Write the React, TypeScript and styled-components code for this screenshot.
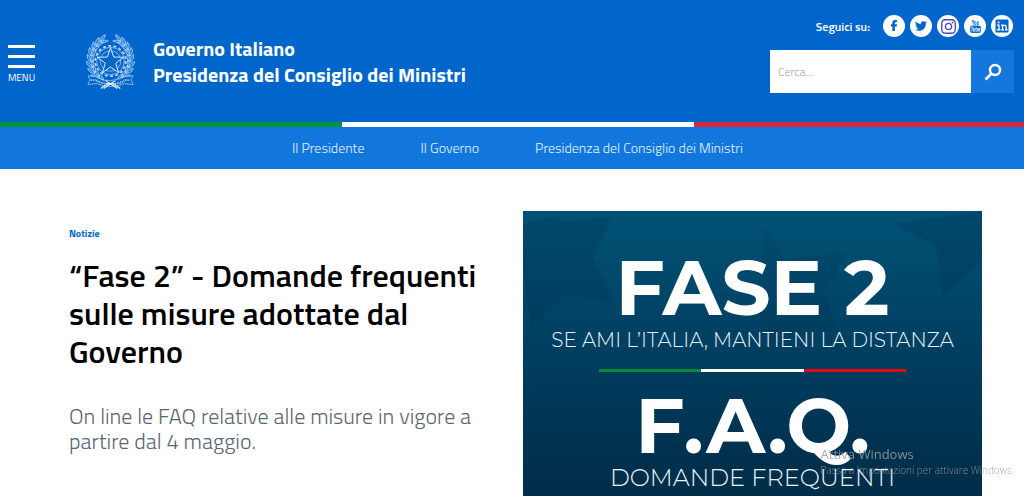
import React from 'react';
import styled, { createGlobalStyle } from 'styled-components';
import { FaTwitter, FaInstagram } from 'react-icons/fa';
import { TfiYoutube } from 'react-icons/tfi';

const GlobalStyle = createGlobalStyle`
  * { box-sizing: border-box; }
  body { margin: 0; background: #fff; font-family: "Titillium Web", Roboto, sans-serif; }
  a { color: inherit; text-decoration: none; }
`;

const Page = styled.div`
  display: flex;
  flex-direction: column;
  min-height: 100vh;
`;

const Header = styled.header`
  display: flex;
  justify-content: space-between;
  height: 122px;
  padding: 0 10px 0 8px;
  background: #0066cc;
  color: #fff;
`;

const HeaderStart = styled.div`
  display: flex;
  align-items: flex-start;
  padding-top: 34px;
`;

const MenuButton = styled.button`
  display: flex;
  flex-direction: column;
  align-items: center;
  width: 27px;
  margin: 11px 51px 0 0;
  padding: 0;
  border: 0;
  background: none;
  color: #fff;
  font: 400 10px/10px "Titillium Web", Roboto, sans-serif;
`;

const MenuBar = styled.span`
  width: 27px;
  height: 3px;
  margin-bottom: 7px;
  background: #fff;
  &:last-of-type { margin-bottom: 5px; }
`;

const Brand = styled.a`
  display: flex;
  gap: 18px;
`;

const BrandName = styled.span`
  padding-top: 2px;
  font-size: 20px;
  font-weight: 700;
  line-height: 26px;
`;

const HeaderEnd = styled.div`
  display: flex;
  flex-direction: column;
  align-items: flex-end;
  gap: 13px;
  width: 244px;
  padding-top: 15px;
`;

const Social = styled.div`
  display: flex;
  align-items: center;
  gap: 5px;
  padding-right: 1px;
  font-size: 12px;
  font-weight: 600;
`;

const SocialLabel = styled.span`
  margin-right: 8px;
`;

const SocialLink = styled.a<{ $color?: string }>`
  display: flex;
  align-items: center;
  justify-content: center;
  width: 22px;
  height: 22px;
  border-radius: 50%;
  background: #fff;
  color: ${(p) => p.$color ?? '#0066cc'};
`;

const Search = styled.form`
  display: flex;
  width: 100%;
  height: 43px;
`;

const SearchInput = styled.input`
  flex: 1;
  min-width: 0;
  padding: 0 8px;
  border: 0;
  border-radius: 0;
  background: #fff;
  font: 300 12px "Titillium Web", Roboto, sans-serif;
  &::placeholder { color: #a8a8a8; opacity: 1; }
`;

const SearchButton = styled.button`
  display: flex;
  align-items: center;
  justify-content: center;
  width: 43px;
  padding: 0;
  border: 0;
  background: #1477de;
`;

const FlagStripe = styled.div`
  display: grid;
  grid-template-columns: 342fr 352fr 330fr;
  height: 5px;
`;

const Stripe = styled.span<{ $color: string }>`
  background: ${(p) => p.$color};
`;

const Nav = styled.nav`
  display: flex;
  justify-content: center;
  align-items: center;
  gap: 56px;
  height: 42px;
  padding-left: 11px;
  background: #1277dc;
  color: #e4f1ff;
  font-size: 14px;
  font-weight: 300;
  line-height: 20px;
`;

const Main = styled.main`
  display: grid;
  grid-template-columns: 412fr 459fr;
  column-gap: 42px;
  flex: 1;
  padding: 42px 42px 0 69px;
`;

const Article = styled.article`
  display: flex;
  flex-direction: column;
  align-items: flex-start;
  padding-top: 15px;
`;

const Category = styled.a`
  color: #0066cc;
  font-size: 10px;
  font-weight: 700;
  line-height: 16px;
`;

const Title = styled.h1`
  margin: 14px 0 0;
  color: #000;
  font-size: 32px;
  font-weight: 600;
  line-height: 38px;
`;

const Summary = styled.p`
  margin: 34px 0 0;
  color: #5a6772;
  font-size: 22px;
  font-weight: 300;
  line-height: 25px;
`;

const Poster = styled.section`
  position: relative;
  display: flex;
  flex-direction: column;
  align-items: center;
  padding-top: 38px;
  background: linear-gradient(#005275, #003e60 50%, #002c47);
  color: #fff;
  font-family: Montserrat, Lato, sans-serif;
  white-space: nowrap;
`;

const PosterArt = styled.svg`
  position: absolute;
  inset: 0;
  width: 100%;
  height: 100%;
`;

const PosterHeading = styled.h2`
  position: relative;
  margin: 0;
  font-size: 77px;
  font-weight: 700;
  line-height: 76px;
`;

const PosterText = styled.p<{ $size: number }>`
  position: relative;
  margin: 0;
  color: #e8f4fb;
  font-size: ${(p) => p.$size}px;
  font-weight: 300;
  line-height: 30px;
`;

const PosterFlag = styled.div`
  position: relative;
  display: grid;
  grid-template-columns: repeat(3, 1fr);
  width: 67%;
  height: 3px;
  margin: 14px 0 15px;
`;

const Watermark = styled.aside`
  position: fixed;
  right: 10px;
  bottom: 18px;
  color: rgba(150, 158, 164, 0.85);
  font: 300 10px/16px "Open Sans", sans-serif;
  pointer-events: none;
`;

const WatermarkTitle = styled.div`
  font-size: 13px;
  font-weight: 400;
`;

const starPoints = (cx: number, cy: number, outer: number, inner: number) =>
  Array.from({ length: 10 }, (_, i) => {
    const r = i % 2 ? inner : outer;
    const a = (-90 + i * 36) * (Math.PI / 180);
    return `${(cx + r * Math.cos(a)).toFixed(2)},${(cy + r * Math.sin(a)).toFixed(2)}`;
  }).join(' ');

const leaves = Array.from({ length: 9 }, (_, i) => {
  const a = (118 + i * 16) * (Math.PI / 180);
  return { x: 25 + 20 * Math.cos(a), y: 26 + 22 * Math.sin(a), turn: 118 + i * 16 + 90 };
});

const Branch = () => (
  <g>
    {leaves.map((l, i) => (
      <g key={i} transform={`translate(${l.x} ${l.y}) rotate(${l.turn})`}>
        <path d="M-3 0Q0-5 5-4Q3 0-3 0Z" />
        <path d="M-3 0Q0 4 5 3Q3 0-3 0Z" />
      </g>
    ))}
  </g>
);

const Emblem = () => (
  <svg width="49" height="56" viewBox="0 0 50 56" fill="none" stroke="#b9d7f6" strokeWidth="0.7" aria-hidden="true">
    <circle cx="25" cy="27" r="15.500" strokeWidth="1.800" strokeDasharray="3 2.400" />
    <circle cx="25" cy="27" r="14" />
    <circle cx="25" cy="27" r="10.500" />
    <polygon points={starPoints(25, 27.5, 14, 5.6)} fill="#0066cc" stroke="#e6f1fd" strokeWidth="1" />
    <g fill="#b9d7f6" fillOpacity=".25">
      <Branch />
      <g transform="translate(50 0) scale(-1 1)"><Branch /></g>
    </g>
    <path fill="#0066cc" d="M2 42l8 1q7 5 15 4t15-4l8-1-2 4 2 5-9-1q-6 3-14 3t-14-3l-9 1 2-5Z" />
    <path strokeWidth="2" strokeDasharray="1 .8" d="M5 46.500l5 0q6 4 15 4t15-4h5" />
    <path strokeWidth="1.200" stroke="#e6f1fd" d="M15 55l9-6M35 55l-9-6M18 55l12-8M32 55l-12-8" />
  </svg>
);

const FacebookMark = () => (
  <svg width="14" height="14" viewBox="0 0 14 14" fill="#0066cc" aria-hidden="true">
    <path d="M10 1.200V3.300H8.700Q7.900 3.300 7.900 4.200V5.300H10L9.700 7.400H7.900V12H5.300V7.400H3.900V5.300H5.300V3.900Q5.300 1 8.200 1Q9.300 1 10 1.200Z" />
  </svg>
);

const LinkedInMark = () => (
  <svg width="14" height="14" viewBox="0 0 14 14" aria-hidden="true">
    <rect x=".5" y=".5" width="13" height="13" rx="1" fill="#0066cc" />
    <g fill="none" stroke="#fff" strokeWidth="1.300">
      <path d="M2 6.200h2v4.600M1.800 10.900h3.600M6 6.200h1.600v4.600M6 10.900h3M7.600 8Q8 6.200 9.600 6.200 11.200 6.200 11.200 8v2.800M10 10.900h2.600" />
    </g>
    <circle cx="3.600" cy="3.600" r="1" fill="#fff" />
  </svg>
);

const tricolor = ['#00923f', '#fff', '#d6293a'];
const posterTricolor = ['#078a36', '#fff', '#e30613'];

export default function App() {
  return (
    <Page>
      <GlobalStyle />
      <Header>
        <HeaderStart>
          <MenuButton type="button">
            <MenuBar /><MenuBar /><MenuBar />
            MENU
          </MenuButton>
          <Brand href="#">
            <Emblem />
            <BrandName>
              Governo Italiano<br />Presidenza del Consiglio dei Ministri
            </BrandName>
          </Brand>
        </HeaderStart>
        <HeaderEnd>
          <Social>
            <SocialLabel>Seguici su:</SocialLabel>
            <SocialLink href="#" aria-label="Facebook"><FacebookMark /></SocialLink>
            <SocialLink href="#" aria-label="Twitter"><FaTwitter size={12} /></SocialLink>
            <SocialLink href="#" aria-label="Instagram" $color="#4a45c4"><FaInstagram size={17} /></SocialLink>
            <SocialLink href="#" aria-label="YouTube"><TfiYoutube size={13} /></SocialLink>
            <SocialLink href="#" aria-label="LinkedIn"><LinkedInMark /></SocialLink>
          </Social>
          <Search>
            <SearchInput type="text" placeholder="Cerca..." aria-label="Cerca" />
            <SearchButton type="button" aria-label="Avvia la ricerca">
              <svg width="18" height="18" viewBox="0 0 18 18" fill="none" stroke="#fff" aria-hidden="true">
                <circle cx="11" cy="7" r="5" strokeWidth="2.400" />
                <path d="M7.500 10.500L1.500 16.500" strokeWidth="2.600" />
              </svg>
            </SearchButton>
          </Search>
        </HeaderEnd>
      </Header>
      <FlagStripe>{tricolor.map((c) => <Stripe key={c} $color={c} />)}</FlagStripe>
      <Nav>
        <a href="#">Il Presidente</a>
        <a href="#">Il Governo</a>
        <a href="#">Presidenza del Consiglio dei Ministri</a>
      </Nav>
      <Main>
        <Article>
          <Category href="#">Notizie</Category>
          <Title>“Fase 2” - Domande frequenti sulle misure adottate dal Governo</Title>
          <Summary>On line le FAQ relative alle misure in vigore a partire dal 4 maggio.</Summary>
        </Article>
        <Poster>
          <PosterArt viewBox="0 0 459 285" preserveAspectRatio="none" fill="#002f50" aria-hidden="true">
            <path opacity=".22" d="M0 12L30 6 42 11 90 6 69 47 91 91 42 84 8 117 0 60Z" />
            <path opacity=".24" d="M370 13L459 0V50L420 84 413 34Z" />
            <path opacity=".16" d="M243 16L262 48 323 42 300 82 316 120 266 126 240 154 236 70Z" />
            <path opacity=".25" d="M360 285Q425 279 459 255V285Z" />
          </PosterArt>
          <PosterHeading>FASE 2</PosterHeading>
          <PosterText $size={20}>SE AMI L’ITALIA, MANTIENI LA DISTANZA</PosterText>
          <PosterFlag>{posterTricolor.map((c) => <Stripe key={c} $color={c} />)}</PosterFlag>
          <PosterHeading>F.A.Q.</PosterHeading>
          <PosterText $size={24}>DOMANDE FREQUENTI</PosterText>
        </Poster>
      </Main>
      <Watermark>
        <WatermarkTitle>Attiva Windows</WatermarkTitle>
        Passa a Impostazioni per attivare Windows.
      </Watermark>
    </Page>
  );
}
